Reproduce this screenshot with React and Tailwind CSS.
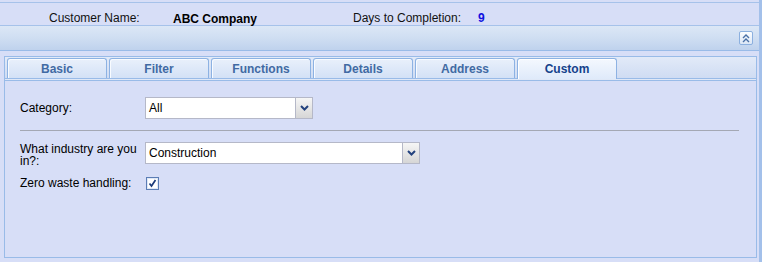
import React from "react";

function Chevron() {
  return (
    <svg width="9" height="6" viewBox="0 0 9 6">
      <path d="M1 1 L4.5 4.5 L8 1" fill="none" stroke="#23427e" strokeWidth="2" />
    </svg>
  );
}

function Combo({ value, width }) {
  return (
    <div className="flex h-[22px]" style={{ width }}>
      <div className="flex-1 bg-white border border-[#b5b8c8] border-r-0 flex items-center pl-[3px] text-[12px] text-black">
        {value}
      </div>
      <div className="w-[18px] border border-[#b5b8c8] bg-gradient-to-b from-[#f6f6f6] to-[#d6d6d6] flex items-center justify-center">
        <Chevron />
      </div>
    </div>
  );
}

const tabs = ["Basic", "Filter", "Functions", "Details", "Address", "Custom"];

export default function App() {
  return (
    <div className="w-[762px] h-[262px] bg-[#d7def7] border-r-[3px] border-[#a3c0ea] flex flex-col overflow-hidden font-['Liberation_Sans',Arial,sans-serif] text-[12px] text-black">
      <div className="h-[2px] shrink-0" />
      <div className="h-[24px] shrink-0 border-y border-[#a6c2ea] flex items-end pl-[49px] leading-[14px]">
        <div className="w-[124px] text-[#111]">Customer Name:</div>
        <div className="w-[180px] font-bold translate-y-[1px]">ABC Company</div>
        <div className="w-[125px] text-[#111]">Days to Completion:</div>
        <div className="font-bold text-[#1010e0]">9</div>
      </div>
      <div className="h-[25px] shrink-0 border-b border-[#99bbe8] bg-gradient-to-b from-[#dce7f6] via-[#cfdef2] to-[#bfd2ed] flex items-center justify-end pr-[6px]">
        <div className="w-[14px] h-[14px] rounded-[2px] border border-[#8cb0df] bg-gradient-to-b from-[#fbfdff] to-[#dce7f6] flex items-center justify-center">
          <svg width="8" height="9" viewBox="0 0 8 9">
            <path d="M1 4 L4 1 L7 4 M1 8 L4 5 L7 8" fill="none" stroke="#4a70a6" strokeWidth="1.4" />
          </svg>
        </div>
      </div>
      <div className="flex-1 pl-[4px] pr-[2px] pt-[5px] pb-[4px] flex flex-col">
        <div className="flex-1 border border-[#99bbe8] flex flex-col">
          <div className="h-[22px] shrink-0 border-b border-[#99bbe8] bg-gradient-to-b from-[#e2eaf8] to-[#cfdcf3] flex items-start gap-[2px] pl-[2px] pt-[1px]">
            {tabs.map((t) => {
              const active = t === "Custom";
              return (
                <div
                  key={t}
                  className={
                    active
                      ? "relative z-10 w-[100px] h-[21px] rounded-t-[3px] border border-b-0 border-[#8db2e3] bg-gradient-to-b from-[#f4f8fe] to-[#dfeafa] shadow-[inset_1px_1px_0_#ffffff] flex items-center justify-center font-bold text-[12px] text-[#15428b]"
                      : "w-[100px] h-[20px] rounded-t-[3px] border border-b-0 border-[#8db2e3] bg-gradient-to-b from-[#e9f0fb] to-[#d3e1f6] shadow-[inset_1px_1px_0_#f8fbff] flex items-center justify-center font-bold text-[12px] text-[#416aa3]"
                  }
                >
                  {t}
                </div>
              );
            })}
          </div>
          <div className="h-[2px] shrink-0 bg-[#dfe8f7] border-b border-[#99bbe8]" />
          <div className="flex-1 pl-[15px] pr-[17px] pt-[16px] flex flex-col">
            <div className="flex items-center h-[22px]">
              <div className="w-[125px]">Category:</div>
              <Combo value="All" width={168} />
            </div>
            <div className="mt-[11px] border-t border-[#a4a8b4]" />
            <div className="flex items-start mt-[11px]">
              <div className="w-[125px] pr-[4px] leading-[12px] pt-[1px]">What industry are you in?:</div>
              <Combo value="Construction" width={275} />
            </div>
            <div className="flex items-center mt-[9px] h-[14px]">
              <div className="w-[126px]">Zero waste handling:</div>
              <div className="w-[13px] h-[13px] bg-white border border-[#5b7db5] shadow-[inset_0_0_0_1px_#dfe8f6] flex items-center justify-center">
                <svg width="9" height="9" viewBox="0 0 9 9">
                  <path d="M1.5 4.5 L3.5 7 L7.5 1" fill="none" stroke="#1b3a7a" strokeWidth="1.7" />
                </svg>
              </div>
            </div>
          </div>
        </div>
      </div>
    </div>
  );
}
